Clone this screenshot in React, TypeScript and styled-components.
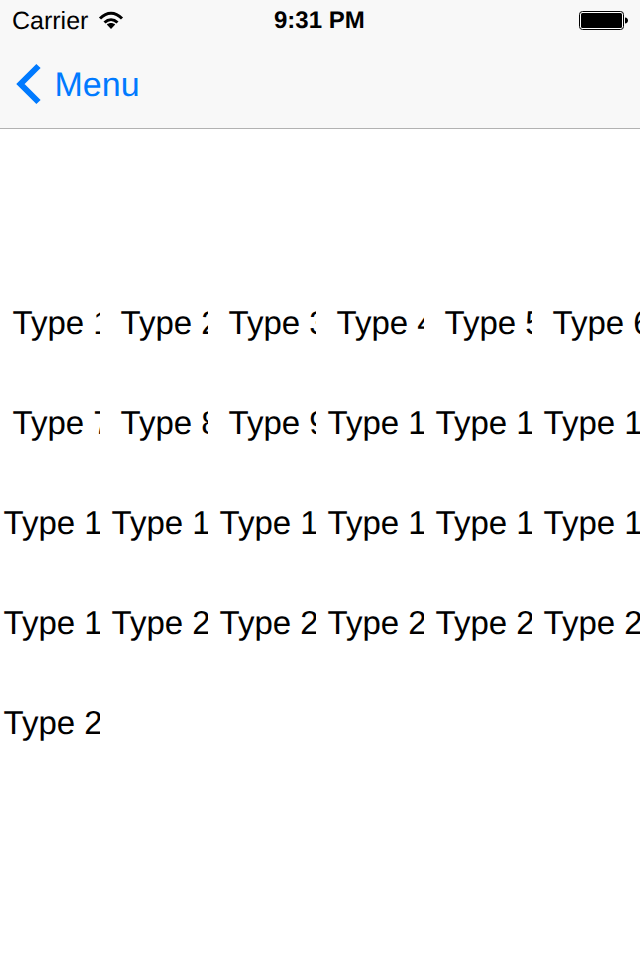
import { createGlobalStyle, styled } from "styled-components"

const GlobalStyle = createGlobalStyle`
  html, body {
    margin: 0;
    padding: 0;
    background: #fff;
    font-family: "Liberation Sans", Arial, sans-serif;
    text-rendering: geometricPrecision;
  }
`

const Page = styled.div`
  width: 640px;
  height: 960px;
  overflow: hidden;
  background: #fff;
`
const Header = styled.header`
  height: 128px;
  background: #f8f8f8;
  border-bottom: 1px solid #b2b2b2;
`
const StatusBar = styled.div`
  display: grid;
  grid-template-columns: 262px auto 1fr;
  align-items: center;
  height: 40px;
  padding: 0 11px 0 12px;
  color: #000;
  font-size: 25px;
`
const StatusLeft = styled.div`
  display: flex;
  align-items: center;
  gap: 10px;
`
const CarrierName = styled.span`
  padding-top: 2px;
`
const Time = styled.div`
  padding-top: 2px;
  font-weight: 700;
  font-size: 24px;
`
const StatusRight = styled.div`
  display: flex;
  justify-content: flex-end;
  padding-top: 1px;
`
const NavBar = styled.nav`
  display: flex;
  align-items: center;
  gap: 12.5px;
  height: 88px;
  padding-left: 16px;
  color: #007aff;
  font-size: 34px;
`
const BackLabel = styled.span`
  padding-top: 2px;
`
const Grid = styled.div`
  display: grid;
  grid-template-columns: repeat(6, 108px);
  grid-auto-rows: 100px;
  padding-top: 144px;
`
const Cell = styled.div<{ $wide: boolean }>`
  width: 100px;
  height: 100px;
  overflow: hidden;
  white-space: nowrap;
  padding-left: ${(p) => (p.$wide ? 3.6 : 12.6)}px;
  box-sizing: border-box;
  color: #000;
  font-size: 33px;
  line-height: 100px;
`

const types = Array.from({ length: 25 }, (_, i) => i + 1)

export default function App() {
  return (
    <Page>
      <GlobalStyle />
      <Header>
        <StatusBar>
          <StatusLeft>
            <CarrierName>Carrier</CarrierName>
            <svg width="26" height="20" viewBox="0 0 26 20">
              <path d="M2 8.5C9 1.5 17 1.5 24 8.5" fill="none" stroke="#000" strokeWidth="3" />
              <path d="M6.5 12.5C10.5 8.8 15.5 8.8 19.5 12.5" fill="none" stroke="#000" strokeWidth="3" />
              <path d="M13 19L8.8 14.6C11.2 12.6 14.8 12.6 17.2 14.6Z" fill="#000" />
            </svg>
          </StatusLeft>
          <Time>9:31 PM</Time>
          <StatusRight>
            <svg width="50" height="20" viewBox="0 0 50 20">
              <rect x="0.5" y="0.5" width="44" height="18" rx="3" fill="#fff" stroke="#000" />
              <rect x="2" y="2" width="41" height="15" rx="1.5" fill="#000" />
              <path d="M46 6.5C48 6.5 49 8 49 9.5C49 11 48 12.5 46 12.5Z" fill="#000" />
            </svg>
          </StatusRight>
        </StatusBar>
        <NavBar>
          <svg width="26" height="42" viewBox="0 0 26 42">
            <path d="M22.5 3L4.5 21L22.5 39" fill="none" stroke="#007aff" strokeWidth="6" />
          </svg>
          <BackLabel>Menu</BackLabel>
        </NavBar>
      </Header>
      <Grid>
        {types.map((n) => (
          <Cell key={n} $wide={n >= 10}>
            Type {n}
          </Cell>
        ))}
      </Grid>
    </Page>
  )
}
